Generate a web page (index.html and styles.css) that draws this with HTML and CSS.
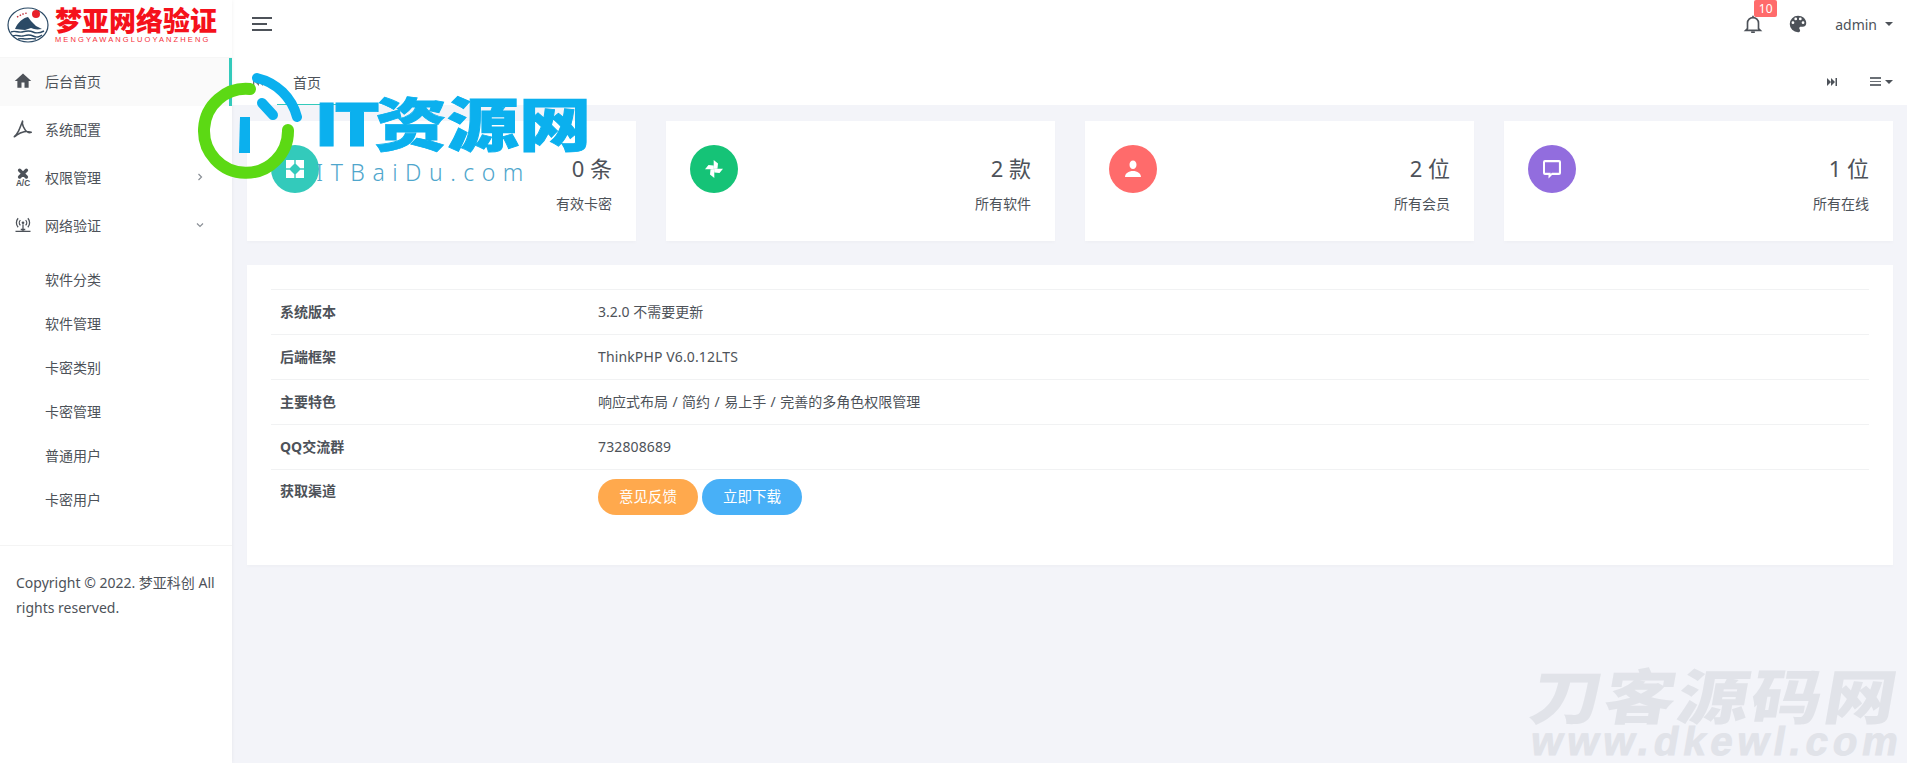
FILE: index.html
```html
<!DOCTYPE html>
<html lang="zh-CN">
<head>
<meta charset="utf-8">
<title>梦亚网络验证</title>
<link rel="stylesheet" href="styles.css">
</head>
<body>
<div class="app">
  <aside class="sidebar">
    <div class="brand">
      <svg class="brand-mark" viewBox="0 0 42 36" width="42" height="36">
        <ellipse cx="21" cy="18" rx="20" ry="17" fill="#fff" stroke="#2b4a66" stroke-width="1.2"/>
        <circle cx="29" cy="7" r="4" fill="#e8202a"/>
        <path d="M8 22c3-7 8-11 13-12l3 4 5 5 6 3c-6 1-8 0-11-1l-6 2z" fill="#2b4a66"/>
        <path d="M4 25c4-2 7 1 11 0s7-2 11 0 7 1 11-1M6 29c4-2 6 1 10 0s6-2 10 0 6 1 9-1M11 32c3-1 5 0 8 0s6-1 10 0" fill="none" stroke="#2b4a66" stroke-width="1.4"/>
        <path d="M10 10l6-3 4-1" fill="none" stroke="#c0323c" stroke-width="1.4" stroke-dasharray="1.5 1.5"/>
      </svg>
      <div class="brand-text">
        <div class="brand-name">梦亚网络验证</div>
        <div class="brand-sub">MENGYAWANGLUOYANZHENG</div>
      </div>
    </div>
    <nav class="menu">
      <a class="menu-item active">
        <svg class="menu-icon" viewBox="0 0 24 24"><path d="M10 21v-7h4v7h5.500v-9H23L12 2 1 12h3.500v9z"/></svg>
        <span>后台首页</span>
      </a>
      <a class="menu-item">
        <svg class="menu-icon" viewBox="0 0 24 24"><path class="acrobat" d="M11.500 1.500c-1 2 0 5 1 7.500 1.400 3.500 3.500 6 6 7.500 1.300.6 3 .6 4.500 0-3-.9-6.500-1.400-9.500-.8-3.500.7-7 2.300-9.500 4.300-1.200 1-2.300 1.800-3.500 2.200 2-2 4-4.500 5.500-7.500 2-3.800 3.500-8.500 5.500-13.200z"/></svg>
        <span>系统配置</span>
      </a>
      <a class="menu-item">
        <svg class="menu-icon" viewBox="0 0 24 24"><path class="fan" d="M12 7.500L7.500 3M12 7.500L16.500 3M12 7.500L7.500 12M12 7.500L16.500 12"/><text class="ac-text" x="12" y="24.500" text-anchor="middle">A/C</text></svg>
        <span>权限管理</span>
        <svg class="chev" viewBox="0 0 10 10"><path d="M3.500 2l3 3-3 3"/></svg>
      </a>
      <a class="menu-item">
        <svg class="menu-icon line" viewBox="0 0 24 24"><circle cx="12" cy="9" r="1.800" fill="#4d5259" stroke="none"/><path d="M8.500 12.500a5 5 0 0 1 0-7M15.500 5.500a5 5 0 0 1 0 7M5.500 15a9 9 0 0 1 0-12M18.500 3a9 9 0 0 1 0 12M12 11v9M2 20.500h20M9 18h6"/></svg>
        <span>网络验证</span>
        <svg class="chev" viewBox="0 0 10 10"><path d="M2 3.500l3 3 3-3"/></svg>
      </a>
      <div class="submenu">
        <a class="sub-item">软件分类</a>
        <a class="sub-item">软件管理</a>
        <a class="sub-item">卡密类别</a>
        <a class="sub-item">卡密管理</a>
        <a class="sub-item">普通用户</a>
        <a class="sub-item">卡密用户</a>
      </div>
    </nav>
    <p class="copyright">Copyright © 2022. 梦亚科创 All rights reserved.</p>
  </aside>

  <main class="main">
    <header class="topbar">
      <button class="burger"><i></i><i class="short"></i><i></i></button>
      <div class="top-actions">
        <span class="bell">
          <svg viewBox="0 0 24 24" width="22" height="22"><path d="M6 17V11a6 6 0 0 1 12 0v6l2 2H4zM10 21h4M12 3v2" fill="none" stroke="#4d5259" stroke-width="1.800"/></svg>
          <b class="badge">10</b>
        </span>
        <svg class="palette" viewBox="0 0 24 24" width="22" height="22"><path d="M12 3a9 9 0 0 0 0 18c1.500 0 2.300-1 2.300-2 0-.6-.3-1-.5-1.400-.3-.4-.4-.8-.4-1.100 0-.9.700-1.500 1.600-1.500H17a4 4 0 0 0 4-4c0-4.500-4-8-9-8zM6.500 12a1.500 1.500 0 1 1 0-3 1.500 1.500 0 0 1 0 3zm3-4a1.500 1.500 0 1 1 0-3 1.500 1.500 0 0 1 0 3zm5 0a1.500 1.500 0 1 1 0-3 1.500 1.500 0 0 1 0 3zm3 4a1.500 1.500 0 1 1 0-3 1.500 1.500 0 0 1 0 3z" fill="#4d5259" fill-rule="evenodd"/></svg>
        <span class="user">admin<i class="caret"></i></span>
      </div>
    </header>

    <div class="tabs">
      <svg class="tab-back" viewBox="0 0 12 12" width="12" height="12"><path d="M11 2v8L7 6zM7 2v8L3 6zM1 2h1.300v8H1z"/></svg>
      <span class="tab-current">首页</span>
      <span class="tab-right">
        <svg class="tab-ctl" viewBox="0 0 12 12" width="12" height="12"><path d="M1 2v8l4-4zM5 2v8l4-4zM9.500 2h1.500v8H9.500z"/></svg>
        <span class="tab-menu"><i></i><i></i><i></i></span><i class="caret"></i>
      </span>
    </div>

    <section class="content">
      <div class="stats">
        <div class="stat">
          <span class="stat-icon teal"><svg viewBox="0 0 24 24" width="24" height="24"><path d="M3 3h8.300v3.800L9 9 6.800 11.300H3zM12.700 3H21v8.300h-3.800L15 9l-2.300-2.200zM3 12.700h3.800L9 15l2.300 2.200V21H3zM17.200 12.700H21V21h-8.300v-3.800L15 15z"/></svg></span>
          <div class="stat-body"><div class="stat-num">0 条</div><div class="stat-label">有效卡密</div></div>
        </div>
        <div class="stat">
          <span class="stat-icon green"><svg viewBox="0 0 24 24" width="24" height="24"><path d="M11.700 11.700V3L16 6.500l-.5 5zM12.300 11.700H21l-3.500 4.300-5-.5zM12.300 12.300V21L8 17.500l.5-5zM11.700 12.300H3l3.500-4.300 5 .5z"/></svg></span>
          <div class="stat-body"><div class="stat-num">2 款</div><div class="stat-label">所有软件</div></div>
        </div>
        <div class="stat">
          <span class="stat-icon red"><svg viewBox="0 0 24 24" width="24" height="24"><path d="M12 3.500c2.100 0 3.500 1.900 3.500 4.200S14.100 12 12 12 8.500 10 8.500 7.700 9.900 3.500 12 3.500zM4 20c0-3.500 3.600-6 8-6s8 2.500 8 6z"/></svg></span>
          <div class="stat-body"><div class="stat-num">2 位</div><div class="stat-label">所有会员</div></div>
        </div>
        <div class="stat">
          <span class="stat-icon purple"><svg viewBox="0 0 24 24" width="24" height="24"><path d="M5 3h14a2 2 0 0 1 2 2v11a2 2 0 0 1-2 2h-7l-3.500 3.500V18H5a2 2 0 0 1-2-2V5a2 2 0 0 1 2-2zm0 2.200v10.600h5.700v1.200l1.200-1.200h7V5.200z" fill-rule="evenodd"/></svg></span>
          <div class="stat-body"><div class="stat-num">1 位</div><div class="stat-label">所有在线</div></div>
        </div>
      </div>

      <div class="panel">
        <table class="info">
          <tbody>
            <tr><th>系统版本</th><td>3.2.0 不需要更新</td></tr>
            <tr><th>后端框架</th><td class="latin">ThinkPHP V6.0.12LTS</td></tr>
            <tr><th>主要特色</th><td class="spaced">响应式布局 / 简约 / 易上手 / 完善的多角色权限管理</td></tr>
            <tr><th>QQ交流群</th><td class="latin">732808689</td></tr>
            <tr class="last"><th>获取渠道</th><td><a class="pill orange">意见反馈</a><a class="pill blue">立即下载</a></td></tr>
          </tbody>
        </table>
      </div>
    </section>
  </main>
</div>

<div class="wm-it">
  <svg class="wm-it-mark" viewBox="0 0 112 112" width="112" height="112">
    <path class="wm-green" d="M60 17A42 42 0 1 0 98 58"/>
    <path class="wm-blue" d="M67 6A54 54 0 0 1 107 45"/>
    <path class="wm-blue" d="M72 31L83 43"/>
    <path class="wm-stem" d="M50 45h10v36H49z"/>
  </svg>
  <div class="wm-it-name"><span class="wm-it-latin">IT</span>资源网</div>
  <div class="wm-it-url">ITBaiDu.com</div>
</div>

<div class="wm-dk">
  <div class="wm-dk-name">刀客源码网</div>
  <div class="wm-dk-url">www.dkewl.com</div>
</div>
</body>
</html>
```

FILE: styles.css
```css
* { box-sizing: border-box; }
html, body { margin: 0; height: 100%; }
body {
  font-family: "Noto Sans", "Noto Sans CJK SC", sans-serif;
  font-size: 14px;
  color: #4d5259;
  background: #f3f4f9;
  overflow: hidden;
  position: relative;
}
i { font-style: normal; }
.app { display: flex; height: 763px; }

.sidebar {
  width: 232px;
  flex: none;
  background: #fff;
  box-shadow: 0 0 4px rgba(0, 0, 0, .06);
  position: relative;
  z-index: 1;
}
.brand { display: flex; align-items: center; gap: 6px; height: 58px; padding: 0 0 8px 7px; border-bottom: 1px solid #f6f6f6; }
.brand-mark { flex: none; }
.brand-text { display: flex; flex-direction: column; }
.brand-name { font-size: 27px; line-height: 29px; font-weight: 900; color: #f5111b; white-space: nowrap; }
.brand-sub { font-size: 7.5px; line-height: 9px; letter-spacing: 2.1px; color: #f5303a; white-space: nowrap; font-family: "Liberation Sans", sans-serif; }

.menu-item { display: flex; align-items: center; height: 48px; padding: 0 27px 2px 14px; position: relative; }
.menu-item.active { background: #fafafa; box-shadow: inset -3px 0 0 #33cabb; }
.menu-icon { width: 18px; height: 18px; fill: #4d5259; margin-right: 13px; flex: none; overflow: visible; }
.menu-icon.line { fill: none; stroke: #4d5259; stroke-width: 1.7; }
.acrobat { fill: none; stroke: #4d5259; stroke-width: 2.1; stroke-linejoin: round; }
.fan { fill: none; stroke: #4d5259; stroke-width: 4.6; stroke-linecap: round; }
.ac-text { font: 700 11px "Liberation Sans", sans-serif; fill: #4d5259; }
.chev { width: 10px; height: 10px; margin-left: auto; fill: none; stroke: #8a8f96; stroke-width: 1.2; }
.submenu { padding: 8px 0 23px; border-bottom: 1px solid #f4f4f4; }
.sub-item { display: flex; align-items: center; height: 44px; padding: 0 0 2px 45px; }
.copyright { margin: 0; padding: 24px 16px 0; line-height: 25px; }

.main { flex: 1; min-width: 0; display: flex; flex-direction: column; }
.topbar { height: 58px; flex: none; background: #fff; display: flex; align-items: center; justify-content: space-between; padding: 0 14px 10px 20px; }
.burger { border: 0; background: none; padding: 0; width: 20px; display: flex; flex-direction: column; gap: 4px; }
.burger i { display: block; height: 2px; width: 20px; background: #4d5259; }
.burger i.short { width: 15px; }
.top-actions { display: flex; align-items: center; }
.bell { position: relative; display: flex; }
.badge { position: absolute; left: 12px; top: -13px; width: 23px; height: 17px; background: #ff6b6b; color: #fff; border-radius: 2px; font-weight: 400; font-size: 12px; line-height: 17px; text-align: center; }
.palette { margin-left: 23px; }
.user { margin-left: 26px; display: flex; align-items: center; }
.caret { display: inline-block; width: 0; height: 0; border: 4px solid transparent; border-top-color: #4d5259; border-bottom-width: 0; margin-left: 8px; }

.tabs { height: 47px; flex: none; background: #fff; display: flex; align-items: center; padding: 0 14px 0 20px; position: relative; }
.tab-back { fill: #6b7076; }
.tab-current { margin-left: 29px; }
.tabs::after { content: ""; position: absolute; left: 45px; bottom: 0; width: 60px; height: 1px; background: #33cabb; }
.tab-right { margin-left: auto; display: flex; align-items: center; }
.tab-ctl { fill: #4d5259; margin-right: 32px; }
.tab-menu { display: flex; flex-direction: column; gap: 2px; width: 11px; }
.tab-menu i { height: 1.5px; background: #6b7076; }
.tab-right .caret { margin-left: 4px; }

.content { flex: 1; padding: 16px 14px 0 15px; }
.stats { display: grid; grid-template-columns: repeat(4, 1fr); gap: 30px; }
.stat { height: 120px; background: #fff; padding: 24px; display: flex; justify-content: space-between; box-shadow: 0 2px 3px rgba(0, 0, 0, .02); }
.stat-icon { width: 48px; height: 48px; border-radius: 50%; display: flex; align-items: center; justify-content: center; flex: none; }
.stat-icon svg { fill: #fff; }
.teal { background: #33cabb; }
.green { background: #15c377; }
.red { background: #ff6b6b; }
.purple { background: #926dde; }
.stat-body { text-align: right; }
.stat-num { font-size: 22px; line-height: 28px; margin-top: 9px; }
.stat-label { line-height: 20px; margin-top: 12px; }

.panel { margin-top: 24px; height: 300px; background: #fff; padding: 24px; box-shadow: 0 2px 3px rgba(0, 0, 0, .02); }
.info { width: 100%; border-collapse: collapse; }
.info th, .info td { height: 45px; padding: 0 8px 2px; border-top: 1px solid #f1f2f3; text-align: left; }
.info th { width: 319px; padding-left: 9px; font-weight: 700; }
.info .latin { letter-spacing: .13px; }
.info .spaced { word-spacing: .8px; }
.info .last th, .info .last td { height: 56px; vertical-align: top; padding-top: 10px; }
.info .last td { padding-top: 9px; }
.pill { display: inline-block; width: 100px; height: 36px; line-height: 35px; border-radius: 18px; color: #fff; text-align: center; font-size: 14.5px; margin-right: 4px; }
.orange { background: #ffa94d; }
.blue { background: #48b0f7; }

.wm-it { position: absolute; left: 190px; top: 72px; width: 420px; height: 115px; pointer-events: none; z-index: 5; }
.wm-it-mark { position: absolute; left: 0; top: 0; fill: none; overflow: visible; }
.wm-green { stroke: #5cd914; stroke-width: 12; stroke-linecap: round; fill: none; }
.wm-blue { stroke: #0bb0ee; stroke-width: 10; stroke-linecap: round; fill: none; }
.wm-stem { fill: #0bb0ee; }
.wm-it-name { position: absolute; left: 124px; top: 17px; font: 900 68px/76px "Noto Sans CJK SC", sans-serif; color: #0bb0ee; white-space: nowrap; transform-origin: left top; transform: scale(1.06, .85); -webkit-text-stroke: 1px #0bb0ee; }
.wm-it-latin { letter-spacing: -5px; margin-right: 0; }
.wm-it-url { position: absolute; left: 126px; top: 86px; font: 300 23px/28px "Noto Sans", sans-serif; letter-spacing: 7.5px; color: #4fa6cc; white-space: nowrap; }

.wm-dk { position: absolute; left: 1532px; top: 662px; width: 365px; pointer-events: none; }
.wm-dk-name { font: 900 70px/64px "Noto Sans CJK SC", sans-serif; letter-spacing: 2px; color: #e1e3e9; transform: skewX(-10deg) scale(1.02, .85); transform-origin: left center; white-space: nowrap; }
.wm-dk-url { font: 900 40px/36px "Liberation Sans", sans-serif; letter-spacing: 4.9px; margin-top: -3px; color: #e1e3e9; -webkit-text-stroke: 1px #e1e3e9; transform: skewX(-10deg); white-space: nowrap; }
```
